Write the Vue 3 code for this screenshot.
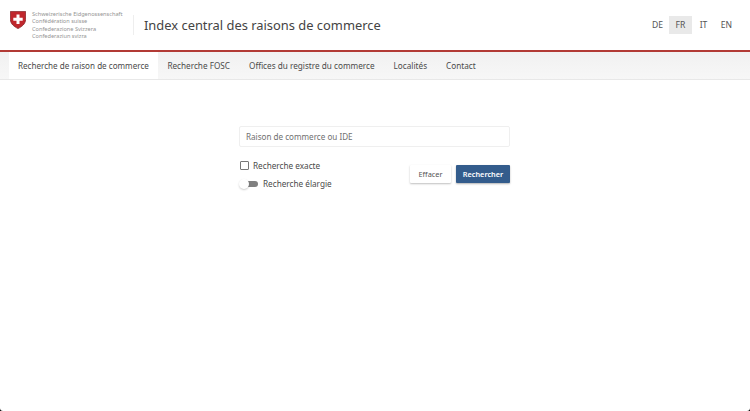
<script setup>
const tabs = ['Recherche de raison de commerce', 'Recherche FOSC', 'Offices du registre du commerce', 'Localités', 'Contact']
const langs = ['DE', 'FR', 'IT', 'EN']
const names = ['Schweizerische Eidgenossenschaft', 'Confédération suisse', 'Confederazione Svizzera', 'Confederaziun svizra']
</script>

<template>
  <div class="page">
    <header class="top">
      <div class="brand">
        <svg class="shield" width="16" height="18" viewBox="0 0 16 18">
          <path d="M0.4 0.4H15.6V8.5C15.6 13 11.5 15.8 8 17.6C4.5 15.8 0.4 13 0.4 8.5Z" fill="#c0272d" stroke="#7d1a1e" stroke-width="0.7"/>
          <path d="M6.5 3.5H9.5V6.7H12.7V9.7H9.5V12.9H6.5V9.7H3.3V6.7H6.5Z" fill="#fff"/>
        </svg>
        <div class="names">
          <span v-for="n in names" :key="n">{{ n }}</span>
        </div>
      </div>
      <span class="divider"></span>
      <h1 class="title">Index central des raisons de commerce</h1>
      <nav class="langs">
        <a v-for="l in langs" :key="l" class="lang" :class="{ on: l === 'FR' }">{{ l }}</a>
      </nav>
    </header>
    <nav class="tabs">
      <a v-for="(t, i) in tabs" :key="t" class="tab" :class="{ active: i === 0 }">{{ t }}</a>
    </nav>
    <main class="main">
      <form class="form" @submit.prevent>
        <input class="field" type="text" placeholder="Raison de commerce ou IDE" />
        <div class="row">
          <div class="options">
            <label class="check"><span class="box"></span>Recherche exacte</label>
            <label class="switch"><span class="track"><span class="knob"></span></span>Recherche élargie</label>
          </div>
          <div class="buttons">
            <button class="btn plain" type="button">Effacer</button>
            <button class="btn primary" type="submit">Rechercher</button>
          </div>
        </div>
      </form>
    </main>
  </div>
</template>

<style>
html, body { background: #000; }
</style>

<style scoped>
.page {
  height: 411px;
  overflow: hidden;
  background: #fff;
  border-radius: 0 0 3px 3px;
  font-family: "Noto Sans", sans-serif;
  color: #333;
  display: flex;
  flex-direction: column;
}
.top {
  height: 52px;
  box-sizing: border-box;
  display: flex;
  align-items: center;
  padding: 0 12px 0 10px;
  flex: none;
  border-bottom: 2px solid #b23a35;
}
.brand {
  display: flex;
  align-items: flex-start;
  width: 123px;
  height: 30px;
}
.shield { margin: 1px 6px 0 0; flex: none; }
.names {
  display: flex;
  flex-direction: column;
  padding-top: 1px;
  font-size: 5.6px;
  line-height: 7.4px;
  color: #949494;
  white-space: nowrap;
}
.divider { width: 1px; height: 20px; background: #eee; flex: none; }
.title {
  margin: 0 0 0 10px;
  font-size: 12.9px;
  font-weight: 400;
  color: #444;
  white-space: nowrap;
  flex: 1;
}
.langs { display: flex; }
.lang {
  width: 23px;
  height: 18px;
  display: flex;
  align-items: center;
  justify-content: center;
  font-size: 8.6px;
  color: #555;
}
.lang.on { background: #e9e9e9; }
.tabs {
  display: flex;
  flex: none;
  height: 28px;
  box-sizing: border-box;
  padding-left: 9px;
  background: linear-gradient(#f1f1f1, #f7f7f7);
  border-bottom: 1px solid #e8e8e8;
}
.tab {
  padding: 0 9.5px;
  display: flex;
  align-items: center;
  font-size: 8.2px;
  color: #4a4a4a;
  white-space: nowrap;
}
.tab.active { background: #fff; padding: 0 9px; font-size: 8.1px; }
.main { flex: 1; display: flex; justify-content: center; padding-top: 46px; }
.form { width: 271px; margin-left: -1px; }
.field {
  display: block;
  width: 100%;
  height: 21px;
  box-sizing: border-box;
  padding: 0 6px;
  border: 1px solid #efefef;
  border-radius: 2px;
  font: 8.1px "Noto Sans", sans-serif;
  outline: none;
}
.field::placeholder { color: #707070; opacity: 1; }
.row { display: flex; justify-content: space-between; align-items: flex-start; margin-top: 13px; }
.options { display: flex; flex-direction: column; gap: 7px; }
.check, .switch {
  display: flex;
  align-items: center;
  font-size: 8.2px;
  line-height: 11px;
  color: #4a4a4a;
  white-space: nowrap;
}
.box {
  width: 7px;
  height: 7px;
  border: 1px solid #777;
  border-radius: 1px;
  margin: 0 4px 0 1px;
}
.track {
  position: relative;
  width: 18px;
  height: 6px;
  background: #808080;
  border-radius: 3px;
  margin: 0 5px 0 1px;
}
.knob {
  position: absolute;
  left: -1px;
  top: -2px;
  width: 10px;
  height: 10px;
  border-radius: 50%;
  background: #fff;
  box-shadow: 0 1px 2px rgba(0, 0, 0, .2);
}
.buttons { display: flex; gap: 5px; margin-top: 5px; }
.btn {
  height: 18px;
  border: 0;
  border-radius: 1px;
  font: 7.4px "Noto Sans", sans-serif;
  padding: 0;
}
.plain { width: 41px; background: #fff; color: #555; box-shadow: 0 1px 2px rgba(0, 0, 0, .25); }
.primary { width: 54px; background: #335c8c; color: #fff; font-weight: 600; font-size: 7.3px; box-shadow: 0 1px 2px rgba(0, 0, 0, .3); }
</style>
